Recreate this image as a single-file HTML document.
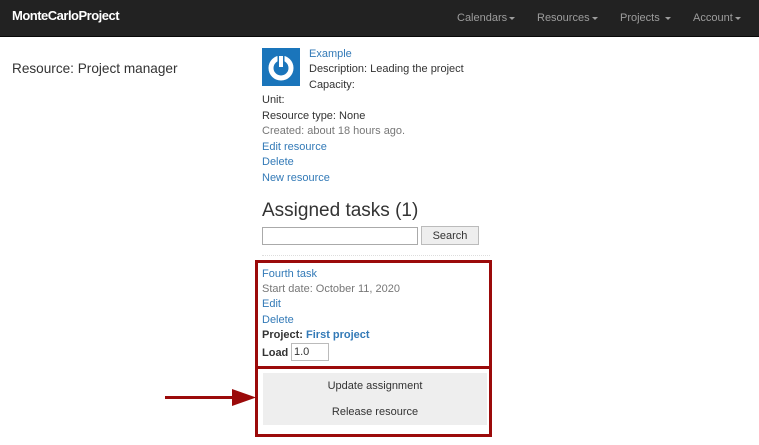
<!DOCTYPE html>
<html><head><style>
*{margin:0;padding:0;box-sizing:border-box}
body{width:759px;height:445px;overflow:hidden;background:#fff;font-family:"Liberation Sans",sans-serif;font-size:11px;color:#333;position:relative}
.nav{position:absolute;left:0;top:0;width:759px;height:37px;background:#222;border-bottom:1px solid #080808}
.brand{position:absolute;left:12px;top:8px;color:#fff;font-size:13px;font-weight:bold;letter-spacing:-0.5px}
.nl{position:absolute;top:12px;color:#9d9d9d;font-size:11px}
.car{display:inline-block;border-left:3px solid transparent;border-right:3px solid transparent;border-top:3px solid #9d9d9d;vertical-align:middle;margin-left:2px}
a{color:#337ab7;text-decoration:none}
.t{position:absolute;white-space:nowrap;line-height:13px}
.g{color:#777}
.box{position:absolute;border:3px solid #9b0a0a}
.btn{position:absolute;left:263px;width:224px;background:#eee;text-align:center;color:#333;font-size:11px;line-height:26px;height:26px}
</style></head><body>
<div class="nav">
<div class="brand">MonteCarloProject</div>
<div class="nl" style="left:457px">Calendars<span class="car"></span></div>
<div class="nl" style="left:537px">Resources<span class="car"></span></div>
<div class="nl" style="left:620px">Projects <span class="car"></span></div>
<div class="nl" style="left:693px">Account<span class="car"></span></div>
</div>
<div class="t" style="left:12px;top:61px;font-size:13.6px;line-height:16px">Resource: Project manager</div>
<svg style="position:absolute;left:262px;top:48px" width="38" height="38" viewBox="0 0 38 38"><rect width="38" height="38" fill="#1a75bb"/><circle cx="19" cy="20" r="10" fill="none" stroke="#fff" stroke-width="5"/><rect x="15.5" y="6" width="7" height="14" fill="#1a75bb"/><rect x="17" y="8" width="4" height="11" fill="#fff"/></svg>
<div class="t" style="left:309px;top:48px"><a>Example</a></div>
<div class="t" style="left:309px;top:63px">Description: Leading the project</div>
<div class="t" style="left:309px;top:79px">Capacity:</div>
<div class="t" style="left:262px;top:94px">Unit:</div>
<div class="t" style="left:262px;top:110px">Resource type: None</div>
<div class="t g" style="left:262px;top:125px">Created: about 18 hours ago.</div>
<div class="t" style="left:262px;top:141px"><a>Edit resource</a></div>
<div class="t" style="left:262px;top:156px"><a>Delete</a></div>
<div class="t" style="left:262px;top:172px"><a>New resource</a></div>
<div class="t" style="left:262px;top:200px;font-size:19px;line-height:22px">Assigned tasks (1)</div>
<div style="position:absolute;left:262px;top:227px;width:156px;height:18px;border:1px solid #aaa"></div>
<div style="position:absolute;left:421px;top:226px;width:58px;height:19px;border:1px solid #bbb;background:#eee;text-align:center;line-height:19px">Search</div>
<div style="position:absolute;left:262px;top:255px;width:228px;border-top:1px dotted #ddd"></div>
<div class="box" style="left:255px;top:260px;width:237px;height:109px"></div>
<div class="box" style="left:255px;top:366px;width:237px;height:71px"></div>
<div class="t" style="left:262px;top:268px"><a>Fourth task</a></div>
<div class="t g" style="left:262px;top:283px">Start date: October 11, 2020</div>
<div class="t" style="left:262px;top:298px"><a>Edit</a></div>
<div class="t" style="left:262px;top:314px"><a>Delete</a></div>
<div class="t" style="left:262px;top:329px"><b>Project: </b><a style="font-weight:bold">First project</a></div>
<div class="t" style="left:262px;top:347px"><b>Load</b></div>
<div style="position:absolute;left:291px;top:343px;width:38px;height:18px;border:1px solid #bbb;padding-left:2px;line-height:17px">1.0</div>
<div class="btn" style="top:373px">Update assignment</div>
<div class="btn" style="top:399px">Release resource</div>
<div style="position:absolute;left:165px;top:396px;width:75px;height:3px;background:#9b0a0a"></div>
<svg style="position:absolute;left:232px;top:389px" width="24" height="17"><polygon points="0,0 24,8.5 0,17" fill="#9b0a0a"/></svg>
</body></html>
